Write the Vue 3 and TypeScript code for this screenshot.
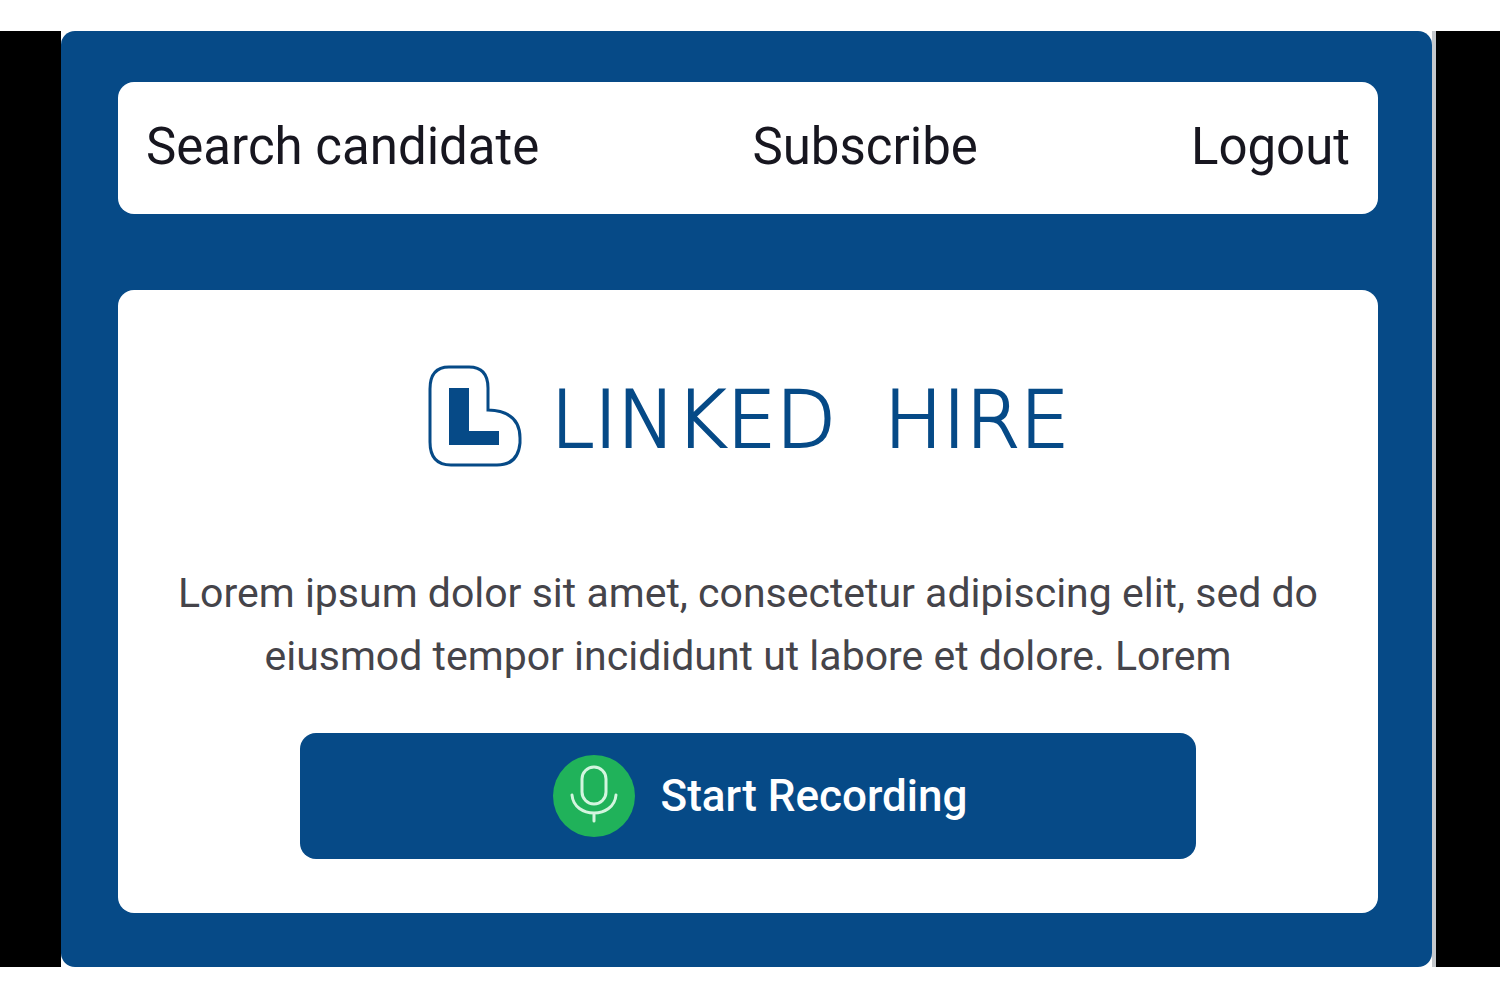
<script setup lang="ts">
interface NavItem {
  label: string
  href: string
}

const navItems: NavItem[] = [
  { label: 'Search candidate', href: '#search' },
  { label: 'Subscribe', href: '#subscribe' },
  { label: 'Logout', href: '#logout' },
]
</script>

<template>
  <div class="stage">
    <div class="frame">
      <div class="panel">
        <nav class="card nav" aria-label="Main">
          <a v-for="item in navItems" :key="item.label" :href="item.href">{{ item.label }}</a>
        </nav>
        <main class="card content">
          <div class="brand">
            <svg class="mark" width="96" height="104" viewBox="0 0 96 104" aria-hidden="true">
              <path
                d="M22 3 H42 Q61 3 61 24 V46 Q93 47 93 74 V79 Q91 101 70 101 H24 Q3 101 3 78 V25 Q3 3 22 3 Z"
                fill="none"
                stroke="#064a87"
                stroke-width="3"
              />
              <path d="M22 24 H42 V67 H72 V81 H22 Z" fill="#064a87" />
            </svg>
            <span class="wordmark"><span>LINKED</span> <span>HIRE</span></span>
          </div>
          <p class="intro">
            Lorem ipsum dolor sit amet, consectetur adipiscing elit, sed do eiusmod tempor
            incididunt ut labore et dolore. Lorem
          </p>
          <button type="button" class="record">
            <svg width="84" height="84" viewBox="0 0 84 84" aria-hidden="true">
              <circle cx="42" cy="42" r="41" fill="#20b25a" />
              <g fill="none" stroke="#d3f5df" stroke-width="3" stroke-linecap="round">
                <rect x="30" y="13" width="24" height="37" rx="12" />
                <path d="M20 41 C22 65 62 65 64 41 M42 60 V67" />
              </g>
            </svg>
            <span>Start Recording</span>
          </button>
        </main>
      </div>
    </div>
  </div>
</template>

<style>
body {
  margin: 0;
  background: #fff;
}
</style>

<style scoped>
.stage {
  padding: 31px 0 32px;
  font-family: Roboto, 'Liberation Sans', sans-serif;
}

.frame {
  padding-right: 4px;
  border: solid #000;
  border-width: 0 64px 0 61px;
  background: linear-gradient(#fff, #fff) content-box, #c4c8cc;
}

.panel {
  display: flex;
  flex-direction: column;
  gap: 76px;
  padding: 51px 54px 54px 57px;
  border-radius: 14px;
  background: #064a87;
}

.card {
  box-sizing: border-box;
  border-radius: 16px;
  background: #fff;
}

.nav {
  display: flex;
  justify-content: space-between;
  align-items: center;
  padding: 35px 28px 37px;
}

.nav a {
  color: #17161f;
  font-size: 51px;
  line-height: 60px;
  text-decoration: none;
  white-space: nowrap;
}

.content {
  display: flex;
  flex-direction: column;
  align-items: center;
  padding: 74px 48px 54px;
}

.brand {
  display: flex;
  align-items: center;
  gap: 28px;
  color: #064a87;
}

.mark {
  flex: none;
}

.wordmark {
  display: flex;
  gap: 48px;
  padding-top: 8px;
  font-family: 'DejaVu Sans', sans-serif;
  font-size: 78px;
  font-weight: 200;
  line-height: 96px;
  -webkit-text-stroke: 2px #064a87;
}

.intro {
  margin: 94px 0 45px;
  color: #45444a;
  font-size: 41px;
  line-height: 63px;
  text-align: center;
}

.record {
  display: flex;
  justify-content: center;
  align-items: center;
  gap: 24px;
  width: 77%;
  padding: 21px 0 21px 24px;
  border: 0;
  border-radius: 16px;
  background: #064a87;
  color: #fff;
  font: 500 44px/54px Roboto, 'Liberation Sans', sans-serif;
}
</style>
